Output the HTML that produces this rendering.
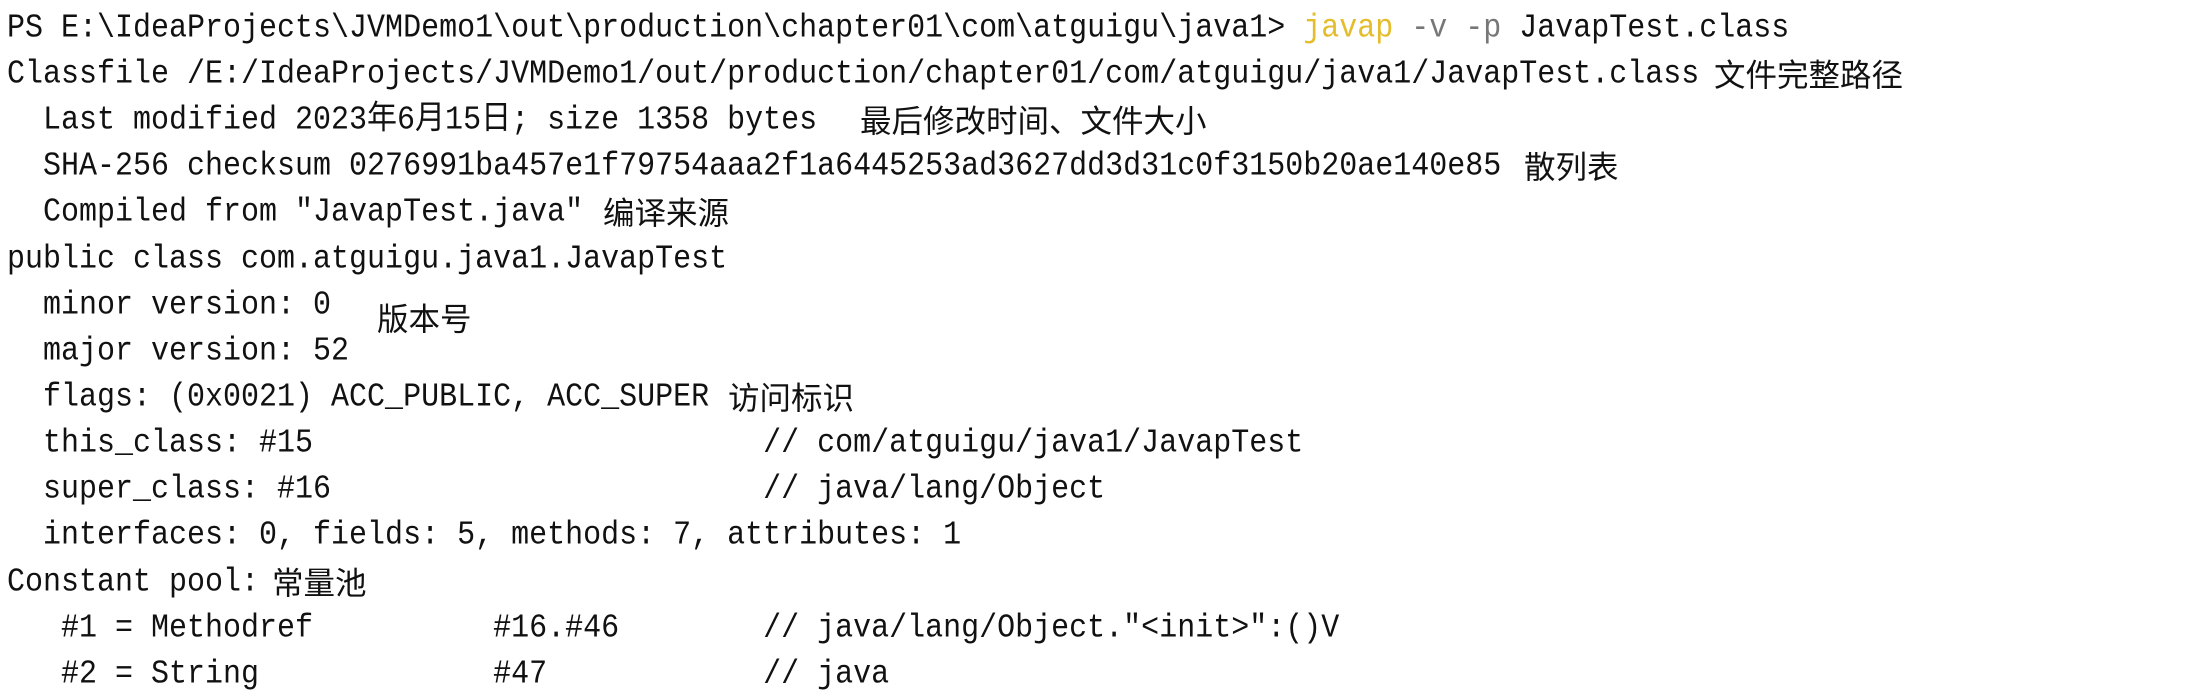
<!DOCTYPE html>
<html><head><meta charset="utf-8"><style>
html,body{margin:0;padding:0;background:#fff;width:2190px;height:696px;overflow:hidden}
.l{position:absolute;left:7px;height:46px;line-height:46px;font-family:"Liberation Mono","Noto Sans CJK SC",monospace;font-size:30px;color:#111;white-space:pre;transform:scaleY(1.1);transform-origin:0 50%}
.c{position:absolute;font-family:"Liberation Sans","Noto Sans CJK SC",sans-serif;font-size:31.5px;color:#111;line-height:46px;white-space:pre}
.y{color:#e4bd2c}.g{color:#777}
</style></head><body>
<div class="l" style="top:6px">PS E:\IdeaProjects\JVMDemo1\out\production\chapter01\com\atguigu\java1&gt; <span class="y">javap</span> <span class="g">-v -p</span> JavapTest.class</div>
<div class="l" style="top:52px">Classfile /E:/IdeaProjects/JVMDemo1/out/production/chapter01/com/atguigu/java1/JavapTest.class</div>
<div class="c" style="top:52px;left:1714px">文件完整路径</div>
<div class="l" style="top:98px">  Last modified 2023年6月15日; size 1358 bytes</div>
<div class="c" style="top:98px;left:860px">最后修改时间、文件大小</div>
<div class="l" style="top:144px">  SHA-256 checksum 0276991ba457e1f79754aaa2f1a6445253ad3627dd3d31c0f3150b20ae140e85</div>
<div class="c" style="top:144px;left:1524px">散列表</div>
<div class="l" style="top:190px">  Compiled from "JavapTest.java"</div>
<div class="c" style="top:190px;left:603px">编译来源</div>
<div class="l" style="top:237px">public class com.atguigu.java1.JavapTest</div>
<div class="l" style="top:283px">  minor version: 0</div>
<div class="c" style="top:296px;left:377px">版本号</div>
<div class="l" style="top:329px">  major version: 52</div>
<div class="l" style="top:375px">  flags: (0x0021) ACC_PUBLIC, ACC_SUPER</div>
<div class="c" style="top:375px;left:728px">访问标识</div>
<div class="l" style="top:421px">  this_class: #15                         // com/atguigu/java1/JavapTest</div>
<div class="l" style="top:467px">  super_class: #16                        // java/lang/Object</div>
<div class="l" style="top:513px">  interfaces: 0, fields: 5, methods: 7, attributes: 1</div>
<div class="l" style="top:560px">Constant pool:</div>
<div class="c" style="top:560px;left:272px">常量池</div>
<div class="l" style="top:606px">   #1 = Methodref          #16.#46        // java/lang/Object."&lt;init&gt;":()V</div>
<div class="l" style="top:652px">   #2 = String             #47            // java</div>
</body></html>
